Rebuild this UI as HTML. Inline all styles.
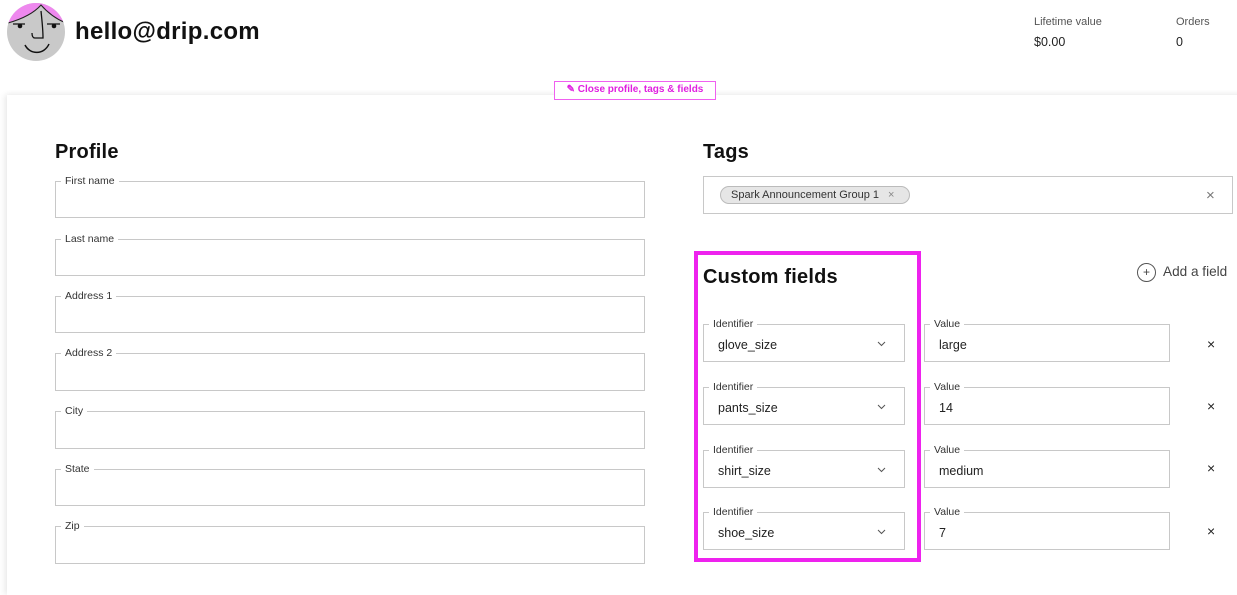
<!DOCTYPE html>
<html><head><meta charset="utf-8">
<style>
*{box-sizing:border-box;margin:0;padding:0}
body{width:1237px;height:569px;overflow:hidden;background:#fff;font-family:"Liberation Sans",sans-serif;color:#111;position:relative}
.abs{position:absolute}
.card{position:absolute;left:7px;top:95px;width:1240px;height:500px;background:#fff;box-shadow:-3px 0 6px rgba(0,0,0,0.07),0 -2px 5px rgba(0,0,0,0.03)}
.f{position:absolute;border:1px solid #c8c8c8;background:#fff}
.f .l{position:absolute;top:-8px;left:5px;background:#fff;padding:0 4px;font-size:10.5px;color:#333;line-height:14px}
.f .v{position:absolute;left:14px;top:13px;font-size:12.5px;color:#222}
.h{position:absolute;font-size:20px;font-weight:bold;letter-spacing:0.2px}
.chev{position:absolute;right:18px;top:16px}
.x{position:absolute;font-size:14px;color:#222}
</style></head><body>
<svg class="abs" style="left:6px;top:3px" width="60" height="58" viewBox="0 0 60 58">
<defs><clipPath id="c"><circle cx="30" cy="29" r="29"/></clipPath></defs>
<circle cx="30" cy="29" r="29" fill="#c9c9c9"/>
<g clip-path="url(#c)"><path d="M0 0 H60 V20 C50 16 42 10 35 2 C28 10 16 16 0 20Z" fill="#ee88ee"/>
<path d="M2 20 C16 16 28 10 35 2 C42 10 50 16 60 20" stroke="#222" stroke-width="1" fill="none"/></g>
<path d="M7 21 L19 21 M41 21 L54 21" stroke="#111" stroke-width="1.3"/>
<circle cx="14" cy="23" r="2.3" fill="#111"/><circle cx="48" cy="23" r="2.3" fill="#111"/>
<path d="M35 8 C36 18 37 26 37 35 L29 35 C27 35 26 33 26 30" stroke="#111" stroke-width="1.3" fill="none"/>
<path d="M19 42 C24 52 38 52 43 41" stroke="#111" stroke-width="1.5" fill="none"/>
</svg>
<div class="abs" style="left:75px;top:18px;font-size:24px;font-weight:bold;letter-spacing:0.3px">hello@drip.com</div>
<div class="abs" style="left:1034px;top:16px;font-size:11px;color:#555">Lifetime value</div>
<div class="abs" style="left:1034px;top:35px;font-size:12.5px;color:#222">$0.00</div>
<div class="abs" style="left:1176px;top:16px;font-size:11px;color:#555">Orders</div>
<div class="abs" style="left:1176px;top:35px;font-size:12.5px;color:#222">0</div>
<div class="card"></div>
<div class="abs" style="left:554px;top:81px;width:162px;height:19px;border:1.5px solid #f060f0;color:#e020e0;font-size:10px;font-weight:bold;text-align:center;line-height:16px;background:#fff">✎ Close profile, tags &amp; fields</div>

<div class="h" style="left:55px;top:141px">Profile</div>
<div class="f" style="left:55px;top:181px;width:590px;height:37px"><span class="l">First name</span></div>
<div class="f" style="left:55px;top:239px;width:590px;height:37px"><span class="l">Last name</span></div>
<div class="f" style="left:55px;top:296px;width:590px;height:37px"><span class="l">Address 1</span></div>
<div class="f" style="left:55px;top:353px;width:590px;height:38px"><span class="l">Address 2</span></div>
<div class="f" style="left:55px;top:411px;width:590px;height:38px"><span class="l">City</span></div>
<div class="f" style="left:55px;top:469px;width:590px;height:37px"><span class="l">State</span></div>
<div class="f" style="left:55px;top:526px;width:590px;height:38px"><span class="l">Zip</span></div>

<div class="h" style="left:703px;top:141px">Tags</div>
<div class="f" style="left:703px;top:176px;width:530px;height:38px">
<div class="abs" style="left:16px;top:9px;height:18px;width:190px;border:1px solid #bbb;background:#e6e6e6;border-radius:9px;font-size:11px;color:#333;line-height:16px;padding-left:10px">Spark Announcement Group 1 <span style="color:#888;margin-left:6px">×</span></div>
<div class="x" style="left:502px;top:10px;color:#777;font-size:15px">×</div>
</div>

<div class="abs" style="left:694px;top:251px;width:227px;height:311px;border:4px solid #ee22ee"></div>
<div class="h" style="left:703px;top:266px;font-weight:600">Custom fields</div>
<div class="abs" style="left:1137px;top:263px;width:19px;height:19px;border:1px solid #555;border-radius:50%;font-size:12px;text-align:center;line-height:16px;color:#444">+</div>
<div class="abs" style="left:1163px;top:264px;font-size:13.6px;color:#444">Add a field</div>

<div class="f" style="left:703px;top:324px;width:202px;height:38px"><span class="l">Identifier</span><span class="v">glove_size</span><svg class="chev" width="9" height="6"><path d="M1 1L4.5 4.5L8 1" stroke="#555" fill="none"/></svg></div>
<div class="f" style="left:924px;top:324px;width:246px;height:38px"><span class="l">Value</span><span class="v">large</span></div>
<div class="x" style="left:1207px;top:336px">×</div>

<div class="f" style="left:703px;top:387px;width:202px;height:38px"><span class="l">Identifier</span><span class="v">pants_size</span><svg class="chev" width="9" height="6"><path d="M1 1L4.5 4.5L8 1" stroke="#555" fill="none"/></svg></div>
<div class="f" style="left:924px;top:387px;width:246px;height:38px"><span class="l">Value</span><span class="v">14</span></div>
<div class="x" style="left:1207px;top:398px">×</div>

<div class="f" style="left:703px;top:450px;width:202px;height:38px"><span class="l">Identifier</span><span class="v">shirt_size</span><svg class="chev" width="9" height="6"><path d="M1 1L4.5 4.5L8 1" stroke="#555" fill="none"/></svg></div>
<div class="f" style="left:924px;top:450px;width:246px;height:38px"><span class="l">Value</span><span class="v">medium</span></div>
<div class="x" style="left:1207px;top:460px">×</div>

<div class="f" style="left:703px;top:512px;width:202px;height:38px"><span class="l">Identifier</span><span class="v">shoe_size</span><svg class="chev" width="9" height="6"><path d="M1 1L4.5 4.5L8 1" stroke="#555" fill="none"/></svg></div>
<div class="f" style="left:924px;top:512px;width:246px;height:38px"><span class="l">Value</span><span class="v">7</span></div>
<div class="x" style="left:1207px;top:523px">×</div>
</body></html>
